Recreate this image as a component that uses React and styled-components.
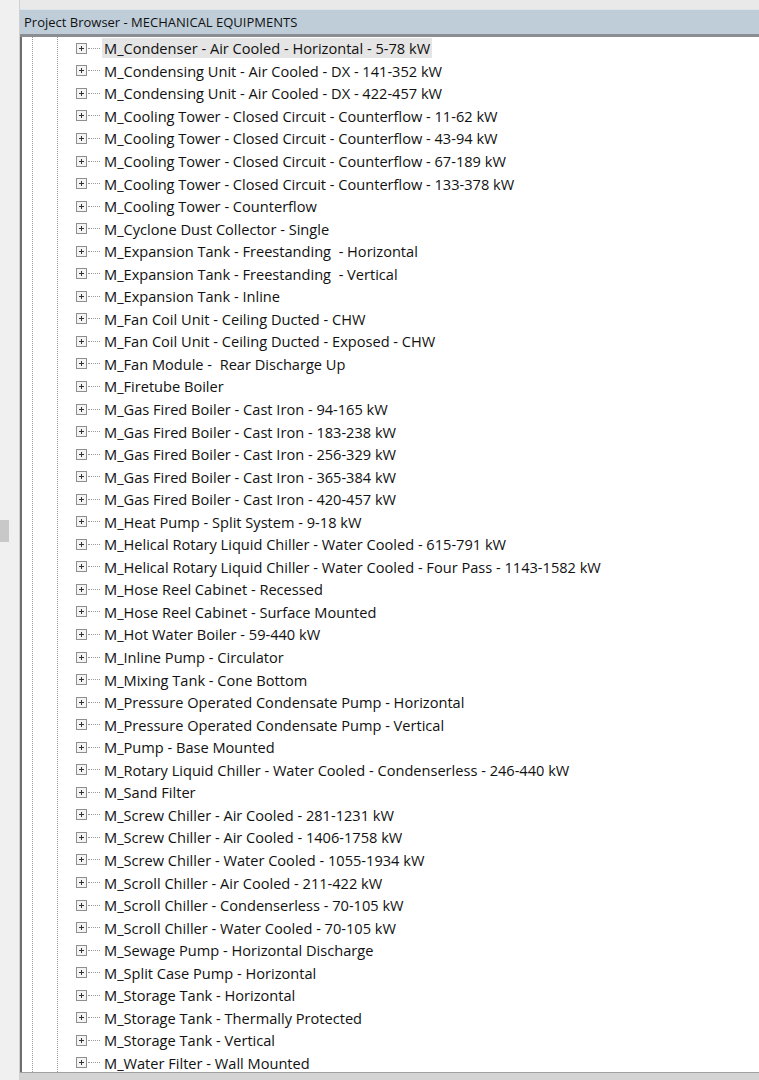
import React from "react";
import styled, { createGlobalStyle } from "styled-components";

const items = [
"M_Condenser - Air Cooled - Horizontal - 5-78 kW",
"M_Condensing Unit - Air Cooled - DX - 141-352 kW",
"M_Condensing Unit - Air Cooled - DX - 422-457 kW",
"M_Cooling Tower - Closed Circuit - Counterflow - 11-62 kW",
"M_Cooling Tower - Closed Circuit - Counterflow - 43-94 kW",
"M_Cooling Tower - Closed Circuit - Counterflow - 67-189 kW",
"M_Cooling Tower - Closed Circuit - Counterflow - 133-378 kW",
"M_Cooling Tower - Counterflow",
"M_Cyclone Dust Collector - Single",
"M_Expansion Tank - Freestanding  - Horizontal",
"M_Expansion Tank - Freestanding  - Vertical",
"M_Expansion Tank - Inline",
"M_Fan Coil Unit - Ceiling Ducted - CHW",
"M_Fan Coil Unit - Ceiling Ducted - Exposed - CHW",
"M_Fan Module -  Rear Discharge Up",
"M_Firetube Boiler",
"M_Gas Fired Boiler - Cast Iron - 94-165 kW",
"M_Gas Fired Boiler - Cast Iron - 183-238 kW",
"M_Gas Fired Boiler - Cast Iron - 256-329 kW",
"M_Gas Fired Boiler - Cast Iron - 365-384 kW",
"M_Gas Fired Boiler - Cast Iron - 420-457 kW",
"M_Heat Pump - Split System - 9-18 kW",
"M_Helical Rotary Liquid Chiller - Water Cooled - 615-791 kW",
"M_Helical Rotary Liquid Chiller - Water Cooled - Four Pass - 1143-1582 kW",
"M_Hose Reel Cabinet - Recessed",
"M_Hose Reel Cabinet - Surface Mounted",
"M_Hot Water Boiler - 59-440 kW",
"M_Inline Pump - Circulator",
"M_Mixing Tank - Cone Bottom",
"M_Pressure Operated Condensate Pump - Horizontal",
"M_Pressure Operated Condensate Pump - Vertical",
"M_Pump - Base Mounted",
"M_Rotary Liquid Chiller - Water Cooled - Condenserless - 246-440 kW",
"M_Sand Filter",
"M_Screw Chiller - Air Cooled - 281-1231 kW",
"M_Screw Chiller - Air Cooled - 1406-1758 kW",
"M_Screw Chiller - Water Cooled - 1055-1934 kW",
"M_Scroll Chiller - Air Cooled - 211-422 kW",
"M_Scroll Chiller - Condenserless - 70-105 kW",
"M_Scroll Chiller - Water Cooled - 70-105 kW",
"M_Sewage Pump - Horizontal Discharge",
"M_Split Case Pump - Horizontal",
"M_Storage Tank - Horizontal",
"M_Storage Tank - Thermally Protected",
"M_Storage Tank - Vertical",
"M_Water Filter - Wall Mounted",
];

const Global = createGlobalStyle`
  html, body { margin: 0; padding: 0; background: #f0f0f0; overflow: hidden; }
  body { font-family: "Open Sans", "Noto Sans", sans-serif; }
`;

const Frame = styled.div`
  display: flex; width: 759px; height: 1080px; background: #e9e9e9;
`;
const Side = styled.div`
  width: 19px; flex: none; background: #f0f0f0; position: relative;
  border-right: 1px solid #d0d0d0;
`;
const Thumb = styled.div`
  position: absolute; left: 0; top: 520px; width: 9px; height: 22px; background: #c8c8c8;
`;
const Main = styled.div`
  flex: 1; display: flex; flex-direction: column; padding-top: 9px;
`;
const Header = styled.div`
  height: 24px; background: #bfcdd9; border-top: 1px solid #dde4ea;
  border-bottom: 3px solid #8a8d91; display: flex; align-items: center;
  padding-left: 4px; font-size: 13px; color: #111;
`;
const List = styled.div`
  flex: 1; background: #fff; border-left: 2px solid #6f6f6f; position: relative;
  overflow: hidden;
`;
const VLine = styled.div`
  position: absolute; top: 0; bottom: 0; left: ${p => p.x}px;
  border-left: 1px dotted #9a9a9a;
`;
const Row = styled.div`
  height: 22.55px; display: flex; align-items: center; padding-left: 54px;
`;
const Plus = styled.div`
  width: 9px; height: 9px; border: 1px solid #8e8e8e; background: #f4f4f4;
  position: relative; flex: none;
  &::before { content: ""; position: absolute; left: 2px; top: 4px; width: 5px; height: 1px; background: #333; }
  &::after { content: ""; position: absolute; left: 4px; top: 2px; width: 1px; height: 5px; background: #333; }
`;
const Dots = styled.div`
  width: 12px; border-top: 1px dotted #9a9a9a; margin: 0 2px 0 1px;
`;
const Label = styled.span`
  font-size: 14.6px; color: #111; white-space: pre; padding: 0 2px;
  background: ${p => (p.sel ? "#e5e5e5" : "transparent")};
  line-height: 20px;
`;
const Bottom = styled.div`
  height: 7px; background: #d4d4d4; border-top: 1px solid #a0a0a0;
`;

export default function App() {
  return (
    <>
      <Global />
      <Frame>
        <Side><Thumb /></Side>
        <Main>
          <Header>Project Browser - MECHANICAL EQUIPMENTS</Header>
          <List>
            <VLine x={10} />
            <VLine x={35} />
            {items.map((t, i) => (
              <Row key={i}>
                <Plus />
                <Dots />
                <Label sel={i === 0}>{t}</Label>
              </Row>
            ))}
          </List>
          <Bottom />
        </Main>
      </Frame>
    </>
  );
}
